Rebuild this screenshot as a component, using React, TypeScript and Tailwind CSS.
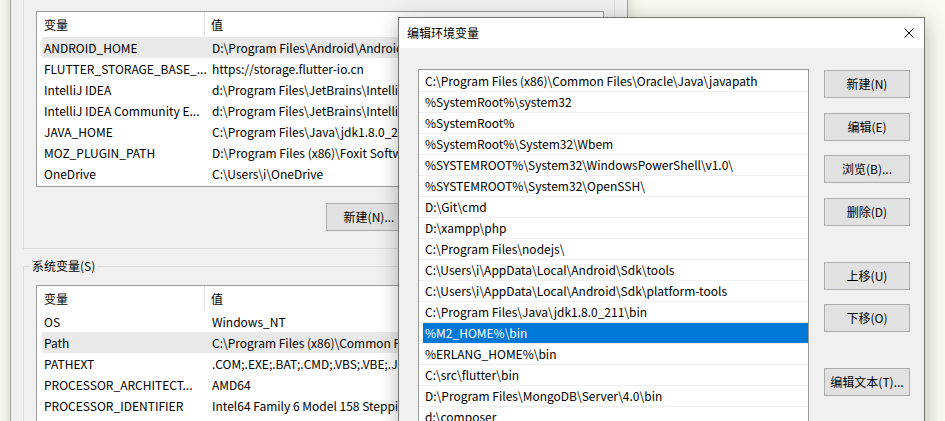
import React from 'react';

const FONT = "font-['Noto_Sans_CJK_SC','Noto_Sans',sans-serif]";

const userVars: [string, string][] = [
  ['ANDROID_HOME', 'D:\\Program Files\\Android\\Android\\sdk'],
  ['FLUTTER_STORAGE_BASE_...', 'https://storage.flutter-io.cn'],
  ['IntelliJ IDEA', 'd:\\Program Files\\JetBrains\\IntelliJ IDEA 2019.1\\bin;'],
  ['IntelliJ IDEA Community E...', 'd:\\Program Files\\JetBrains\\IntelliJ IDEA Community Edition\\bin;'],
  ['JAVA_HOME', 'C:\\Program Files\\Java\\jdk1.8.0_211'],
  ['MOZ_PLUGIN_PATH', 'D:\\Program Files (x86)\\Foxit Software\\Foxit Reader\\plugins\\'],
  ['OneDrive', 'C:\\Users\\i\\OneDrive'],
];

const systemVars: [string, string][] = [
  ['OS', 'Windows_NT'],
  ['Path', 'C:\\Program Files (x86)\\Common Files\\Oracle\\Java\\javapath;%SystemRoot%\\system32'],
  ['PATHEXT', '.COM;.EXE;.BAT;.CMD;.VBS;.VBE;.JS;.JSE;.WSF;.WSH;.MSC'],
  ['PROCESSOR_ARCHITECT...', 'AMD64'],
  ['PROCESSOR_IDENTIFIER', 'Intel64 Family 6 Model 158 Stepping 10, GenuineIntel'],
];

const pathEntries = [
  'C:\\Program Files (x86)\\Common Files\\Oracle\\Java\\javapath',
  '%SystemRoot%\\system32',
  '%SystemRoot%',
  '%SystemRoot%\\System32\\Wbem',
  '%SYSTEMROOT%\\System32\\WindowsPowerShell\\v1.0\\',
  '%SYSTEMROOT%\\System32\\OpenSSH\\',
  'D:\\Git\\cmd',
  'D:\\xampp\\php',
  'C:\\Program Files\\nodejs\\',
  'C:\\Users\\i\\AppData\\Local\\Android\\Sdk\\tools',
  'C:\\Users\\i\\AppData\\Local\\Android\\Sdk\\platform-tools',
  'C:\\Program Files\\Java\\jdk1.8.0_211\\bin',
  '%M2_HOME%\\bin',
  '%ERLANG_HOME%\\bin',
  'C:\\src\\flutter\\bin',
  'D:\\Program Files\\MongoDB\\Server\\4.0\\bin',
  'd:\\composer',
];

function WinButton({ label, className = '' }: { label: string; className?: string }) {
  return (
    <button
      type="button"
      className={`flex h-[28px] w-[86px] flex-shrink-0 items-center justify-center border border-[#adadad] bg-[#e1e1e1] text-[12px] text-black ${className}`}
    >
      {label}
    </button>
  );
}

// list view of the environment variables window; the value column is cut where the dialog covers it
function VarList({ rows, selected, height }: { rows: [string, string][]; selected: number; height: string }) {
  return (
    <div className={`w-[568px] ${height} overflow-hidden border border-[#9a9a9a] bg-white`}>
      <div className="flex h-[25px] items-center pl-[5px]">
        <div className="flex h-full w-[163px] flex-shrink-0 items-center border-r border-[#e5e5e5] pl-[2px]">变量</div>
        <div className="pl-[6px]">值</div>
      </div>
      {rows.map(([name, value], i) => (
        <div
          key={name}
          className={`ml-[5px] flex h-[21px] items-center whitespace-nowrap ${i === selected ? 'bg-[#e9e9e9]' : ''}`}
        >
          <div className="w-[163px] flex-shrink-0 pl-[2px]">{name}</div>
          <div className="w-[193px] flex-shrink-0 overflow-hidden pl-[7px]">{value}</div>
        </div>
      ))}
    </div>
  );
}

export default function App() {
  return (
    <div className={`relative h-[421px] w-[945px] overflow-hidden bg-[#fbfaee] text-[12px] text-black ${FONT}`}>
      {/* Environment variables window (behind) */}
      <div className="absolute left-[10px] top-[-20px] h-[480px] w-[618px] border border-[#a0a0a0] bg-[#f0f0f0] px-[12px] pt-[9px] shadow-[0_0_14px_rgba(0,0,0,0.18)]">
        {/* user variables group */}
        <div className="border border-[#dcdcdc] pb-[17px] pl-[12px] pr-[10px] pt-[20px]">
          <VarList rows={userVars} selected={0} height="h-[176px]" />
          <div className="mt-[16px] flex pl-[290px]">
            <WinButton label="新建(N)..." />
          </div>
        </div>

        {/* system variables group */}
        <div className="relative mt-[17px] border border-[#dcdcdc] pl-[12px] pr-[10px] pt-[18px]">
          <span className="absolute left-[6px] top-[-10px] bg-[#f0f0f0] px-[2px] leading-[18px]">系统变量(S)</span>
          <VarList rows={systemVars} selected={1} height="h-[200px]" />
        </div>
      </div>

      {/* Edit environment variable dialog */}
      <div className="absolute left-[398px] top-[17px] h-[440px] w-[527px] border border-[#767676] bg-[#f0f0f0] shadow-[0_4px_20px_rgba(0,0,0,0.28)]">
        <div className="flex h-[30px] items-center justify-between bg-white pl-[8px] pr-[10px]">
          <span>编辑环境变量</span>
          <svg className="h-[10px] w-[10px]" viewBox="0 0 10 10" aria-hidden>
            <path d="M0.5 0.5L9.5 9.5M9.5 0.5L0.5 9.5" stroke="#000" strokeWidth="1" fill="none" />
          </svg>
        </div>

        <div className="flex pl-[19px] pt-[21px]">
          <div className="h-[400px] w-[391px] overflow-hidden border border-[#9a9a9a] bg-white pt-[1px]">
            {pathEntries.map((p, i) => (
              <div key={p} className="h-[21px] border-b border-[#f0f0f0] pl-[4px]">
                <div
                  className={`flex h-[20px] items-center whitespace-nowrap pl-[2px] ${i === 12 ? 'bg-[#0078d7] text-white' : ''}`}
                >
                  {p}
                </div>
              </div>
            ))}
          </div>

          <div className="ml-[15px] flex flex-col pt-[1px]">
            <WinButton label="新建(N)" />
            <WinButton label="编辑(E)" className="mt-[15px]" />
            <WinButton label="浏览(B)..." className="mt-[14px]" />
            <WinButton label="删除(D)" className="mt-[15px]" />
            <WinButton label="上移(U)" className="mt-[36px]" />
            <WinButton label="下移(O)" className="mt-[14px]" />
            <WinButton label="编辑文本(T)..." className="mt-[36px]" />
          </div>
        </div>
      </div>
    </div>
  );
}
